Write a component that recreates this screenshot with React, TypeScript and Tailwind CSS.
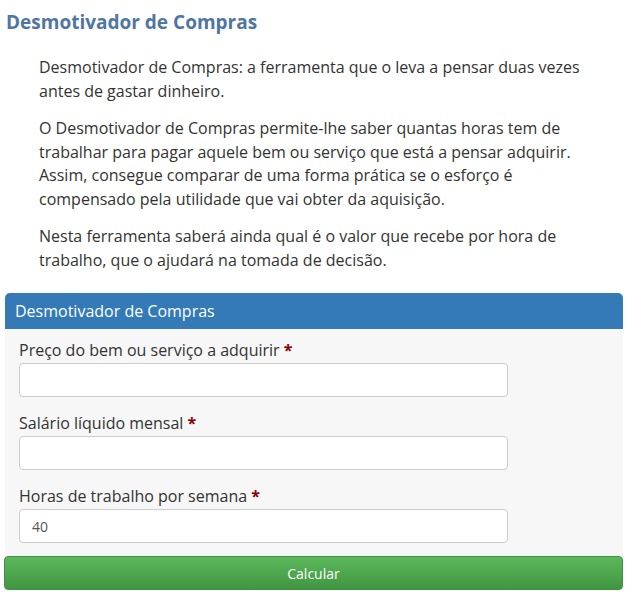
import React from "react";

function Field({ label, value }: { label: string; value?: string }) {
  return (
    <div className="flex flex-col">
      <label className="text-[16px] leading-[22px] text-[#333] mb-[2px]">
        {label} <span className="text-[#8b0000] font-bold">*</span>
      </label>
      <input
        defaultValue={value}
        className="w-[489px] h-[34px] bg-white border border-[#ccc] rounded-[4px] px-[12px] text-[14px] text-[#555] outline-none"
        style={{ fontFamily: "'Open Sans', sans-serif" }}
      />
    </div>
  );
}

export default function App() {
  return (
    <div className="w-[635px] h-[600px] bg-white overflow-hidden" style={{ fontFamily: "'Open Sans', 'Noto Sans', sans-serif" }}>
      <h1 className="pl-[6px] pt-[8px] text-[19px] leading-[28px] font-bold text-[#4f76a3]">Desmotivador de Compras</h1>
      <div className="pl-[39px] pr-[28px] pt-[20px] text-[16px] leading-[23.5px] text-[#333]">
        <p className="mb-[14px]">Desmotivador de Compras: a ferramenta que o leva a pensar duas vezes antes de gastar dinheiro.</p>
        <p className="mb-[14px]">O Desmotivador de Compras permite-lhe saber quantas horas tem de trabalhar para pagar aquele bem ou serviço que está a pensar adquirir. Assim, consegue comparar de uma forma prática se o esforço é compensado pela utilidade que vai obter da aquisição.</p>
        <p>Nesta ferramenta saberá ainda qual é o valor que recebe por hora de trabalho, que o ajudará na tomada de decisão.</p>
      </div>
      <div className="mt-[21px] ml-[5px] mr-[12px]">
        <div className="h-[36px] bg-[#337ab7] rounded-t-[5px] pl-[10px] flex items-center text-white text-[16px]">Desmotivador de Compras</div>
        <div className="bg-[#f7f7f7] pl-[14px] pt-[10px] pb-[13px] flex flex-col gap-[15px]">
          <Field label="Preço do bem ou serviço a adquirir" />
          <Field label="Salário líquido mensal" />
          <Field label="Horas de trabalho por semana" value="40" />
        </div>
      </div>
      <button className="ml-[4px] w-[619px] h-[34px] rounded-[4px] border border-[#3e8f3e] bg-gradient-to-b from-[#5cb85c] to-[#419641] text-white text-[14px]">Calcular</button>
    </div>
  );
}
